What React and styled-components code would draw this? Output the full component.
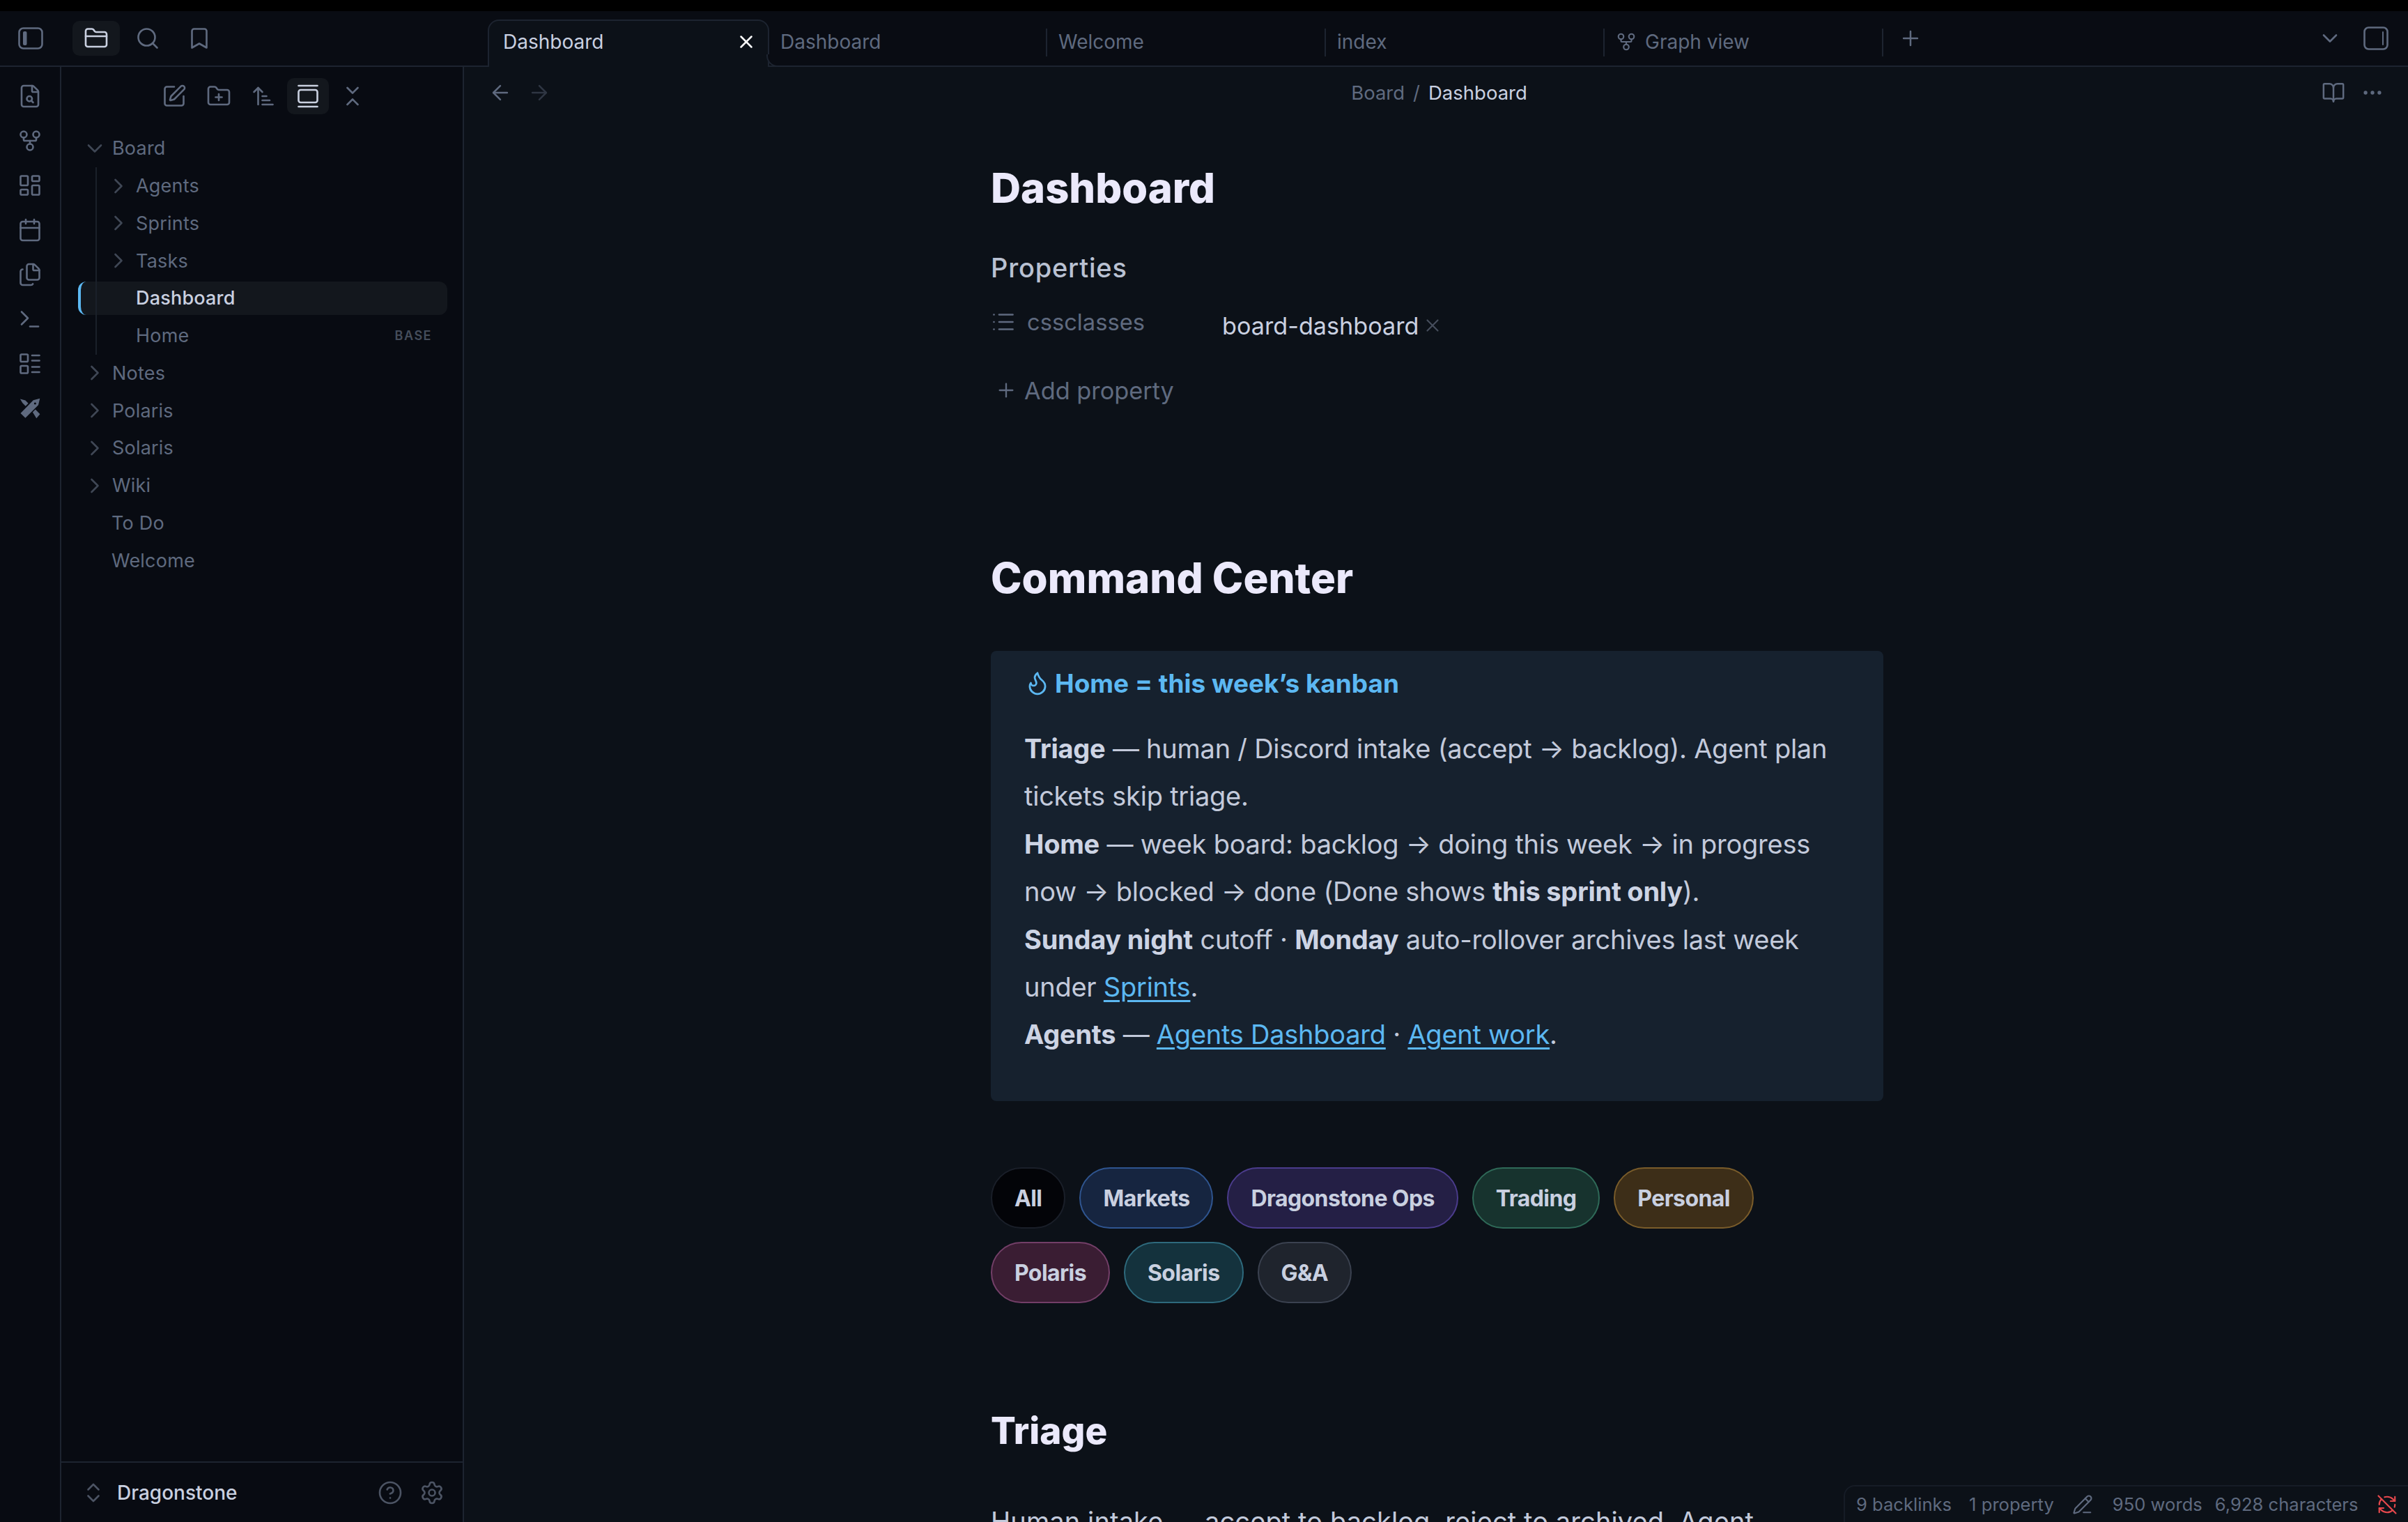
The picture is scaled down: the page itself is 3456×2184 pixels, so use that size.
import React from 'react';
import styled, { createGlobalStyle } from 'styled-components';
import {
  ArrowLeft,
  ArrowRight,
  ArrowUpNarrowWide,
  Bookmark,
  BookOpen,
  Calendar,
  ChevronDown,
  ChevronRight,
  ChevronsDownUp,
  ChevronsUpDown,
  CircleHelp,
  Ellipsis,
  FileSearch,
  Files,
  Flame,
  FolderClosed,
  FolderPlus,
  GalleryVertical,
  GitFork,
  LayoutDashboard,
  LayoutList,
  List,
  PencilLine,
  Plus,
  RefreshCwOff,
  Search,
  Settings,
  SquarePen,
  Terminal,
  X,
} from 'lucide-react';

const line = '#1d2430';
const muted = '#5f6a7f';
const soft = '#c9d0e0';
const blue = '#5cb8f2';

const GlobalStyle = createGlobalStyle`
  html, body {
    margin: 0;
    height: 100%;
    background: #000;
  }
  body {
    font-family: Inter, "Noto Sans", "Liberation Sans", sans-serif;
    overflow: hidden;
  }
  * {
    box-sizing: border-box;
  }
`;

const Page = styled.div`
  width: 3456px;
  height: 2184px;
  display: flex;
  flex-direction: column;
  padding-top: 16px;
  background: #000;
  overflow: hidden;
  position: relative;
`;

const TitleBar = styled.div`
  height: 80px;
  display: flex;
  flex-shrink: 0;
  background: #090c13;
  border-bottom: 2px solid ${line};
`;

const TitleLeft = styled.div`
  width: 700px;
  flex-shrink: 0;
  display: flex;
  align-items: center;
  padding-left: 10px;
`;

const TopButton = styled.div`
  width: 68px;
  height: 50px;
  border-radius: 10px;
  display: flex;
  align-items: center;
  justify-content: center;
  color: ${(p) => (p.$active ? soft : muted)};
  background: ${(p) => (p.$active ? '#13171d' : 'transparent')};
  margin-left: ${(p) => p.$gap || 0}px;
`;

const TabStrip = styled.div`
  flex: 1;
  display: flex;
  align-items: stretch;
  padding-top: 12px;
`;

const ActiveTab = styled.div`
  width: 404px;
  height: 68px;
  margin-bottom: -2px;
  padding: 0 16px 6px 20px;
  display: flex;
  align-items: center;
  justify-content: space-between;
  position: relative;
  color: ${soft};
  font-size: 28px;
  background: #0c1118;
  border: 2px solid ${line};
  border-bottom: 0;
  border-radius: 16px 16px 0 0;
  &::after {
    content: '';
    position: absolute;
    right: -16px;
    bottom: 0;
    width: 16px;
    height: 16px;
    background: #090c13;
    border-left: 2px solid ${line};
    border-bottom: 2px solid ${line};
    border-bottom-left-radius: 16px;
    z-index: 1;
  }
`;

const Tab = styled.div`
  width: ${(p) => p.$width || 400}px;
  height: 40px;
  margin-top: 13px;
  padding: 0 0 3px 16px;
  display: flex;
  align-items: center;
  gap: 12px;
  color: ${muted};
  font-size: 28px;
  border-right: 2px solid ${line};
`;

const TabTools = styled.div`
  flex: 1;
  display: flex;
  align-items: center;
  justify-content: space-between;
  padding: 0 28px 12px 22px;
  color: ${muted};
`;

const TabToolsRight = styled.div`
  display: flex;
  align-items: center;
  gap: 30px;
`;

const Body = styled.div`
  flex: 1;
  min-height: 0;
  display: flex;
`;

const Ribbon = styled.div`
  width: 88px;
  flex-shrink: 0;
  padding-top: 24px;
  display: flex;
  flex-direction: column;
  align-items: center;
  gap: 28px;
  color: ${muted};
  background: #080b12;
  border-right: 2px solid ${line};
`;

const Sidebar = styled.div`
  width: 578px;
  flex-shrink: 0;
  display: flex;
  flex-direction: column;
  background: #080b12;
  border-right: 2px solid ${line};
`;

const SideTools = styled.div`
  height: 74px;
  margin-top: 16px;
  padding-left: 4px;
  display: flex;
  justify-content: center;
  gap: 4px;
  color: ${muted};
`;

const SideTool = styled.div`
  width: 60px;
  height: 52px;
  border-radius: 10px;
  display: flex;
  align-items: center;
  justify-content: center;
  color: ${(p) => (p.$active ? soft : muted)};
  background: ${(p) => (p.$active ? '#13171d' : 'transparent')};
`;

const Tree = styled.div`
  flex: 1;
  padding: 0 22px 0 24px;
`;

const TreeRow = styled.div`
  height: 53.75px;
  display: flex;
  align-items: center;
  position: relative;
  padding-left: ${(p) => p.$indent}px;
  color: ${muted};
  font-size: 27px;
  letter-spacing: 0.2px;
  white-space: nowrap;
`;

const SelectedRow = styled(TreeRow)`
  color: ${soft};
  font-weight: 500;
  &::before {
    content: '';
    position: absolute;
    left: 0;
    right: 0;
    top: 3px;
    bottom: 3px;
    background: #13171d;
    border-left: 4px solid ${blue};
    border-radius: 12px;
  }
  > span {
    position: relative;
  }
`;

const Caret = styled.span`
  width: 43px;
  display: flex;
  align-items: center;
  justify-content: flex-start;
  flex-shrink: 0;
  color: #3f4755;
`;

const Nested = styled.div`
  position: relative;
  &::before {
    content: '';
    position: absolute;
    left: 25px;
    top: 0;
    bottom: 0;
    width: 2px;
    background: #1a2029;
    z-index: 1;
  }
`;

const BaseTag = styled.span`
  position: absolute;
  right: 22px;
  font-size: 18px;
  font-weight: 600;
  letter-spacing: 1.5px;
  color: #454d5b;
`;

const VaultBar = styled.div`
  height: 87px;
  display: flex;
  align-items: center;
  padding: 0 26px 0 28px;
  border-top: 2px solid ${line};
  color: ${soft};
  font-size: 28px;
  font-weight: 500;
`;

const VaultName = styled.span`
  flex: 1;
  padding-left: 16px;
`;

const VaultIcons = styled.div`
  display: flex;
  gap: 24px;
  color: #4c5464;
`;

const Main = styled.div`
  flex: 1;
  min-width: 0;
  background: #0c1118;
  position: relative;
  overflow: hidden;
`;

const NavBar = styled.div`
  height: 74px;
  padding: 0 34px 0 35px;
  display: flex;
  align-items: center;
  justify-content: space-between;
`;

const NavSide = styled.div`
  width: 300px;
  display: flex;
  align-items: center;
  gap: 22px;
  color: ${muted};
  justify-content: ${(p) => (p.$right ? 'flex-end' : 'flex-start')};
`;

const NavArrow = styled.span`
  display: flex;
  color: ${(p) => (p.$dim ? '#2f3643' : muted)};
`;

const Crumbs = styled.div`
  margin-left: 8px;
  font-size: 27.5px;
  color: ${muted};
  display: flex;
  gap: 12px;
`;

const CrumbCurrent = styled.span`
  color: ${soft};
`;

const Sheet = styled.div`
  width: 1281px;
  margin-left: 756px;
`;

const Title = styled.h1`
  margin: 64px 0 0;
  font-size: 59.6px;
  line-height: 70px;
  font-weight: 800;
  color: #ebe9fb;
`;

const PropsHeading = styled.div`
  margin-top: 58px;
  font-size: 38px;
  letter-spacing: 0.8px;
  line-height: 44px;
  font-weight: 500;
  color: #b9c1d2;
`;

const PropRow = styled.div`
  margin-top: 34px;
  display: flex;
  height: 60px;
`;

const PropKey = styled.div`
  width: 332px;
  display: flex;
  align-items: center;
  align-self: flex-start;
  gap: 16px;
  height: 44px;
  font-size: 32.7px;
  color: ${muted};
  flex-shrink: 0;
`;

const PropValue = styled.div`
  display: flex;
  align-items: center;
  gap: 4px;
  height: 54px;
  font-size: 34.2px;
  color: ${soft};
`;

const RemoveMark = styled.span`
  display: flex;
  color: #464e5c;
`;

const AddProperty = styled.div`
  margin-top: 36px;
  padding-left: 6px;
  height: 48px;
  display: flex;
  align-items: center;
  gap: 10px;
  font-size: 34.3px;
  color: ${muted};
`;

const Heading = styled.h2`
  margin: ${(p) => p.$top}px 0 0;
  font-size: ${(p) => p.$size}px;
  line-height: 70px;
  font-weight: 800;
  color: #ebe9fb;
`;

const Callout = styled.div`
  margin-top: 70px;
  height: 646px;
  padding: 20px 48px 0;
  background: #16212e;
  border-radius: 8px;
`;

const CalloutTitle = styled.div`
  display: flex;
  align-items: center;
  gap: 6px;
  height: 52px;
  font-size: 37px;
  font-weight: 700;
  color: ${blue};
`;

const CalloutText = styled.div`
  margin-top: 34px;
`;

const CalloutLine = styled.div`
  font-size: 38px;
  line-height: 68.4px;
  letter-spacing: -0.25px;
  white-space: nowrap;
  color: #c3cadb;
  b {
    font-weight: 700;
    color: #cdd4e4;
  }
  a {
    color: ${blue};
    text-decoration: underline;
    text-underline-offset: 5px;
  }
`;

const PillGroup = styled.div`
  margin-top: 95px;
  max-width: 1160px;
  display: flex;
  flex-wrap: wrap;
  gap: 19px 20px;
`;

const Pill = styled.div`
  height: 88px;
  padding: 0 32px;
  display: flex;
  align-items: center;
  border-radius: 44px;
  font-size: 32px;
  font-weight: 700;
  letter-spacing: -0.6px;
  color: ${soft};
  background: ${(p) => p.$bg};
  border: 2px solid ${(p) => p.$edge};
`;

const BodyText = styled.p`
  margin: 61px 0 0;
  font-size: 38px;
  line-height: 68px;
  letter-spacing: 0.1px;
  color: #c3cadb;
  white-space: nowrap;
`;

const StatusBar = styled.div`
  position: absolute;
  right: 0;
  bottom: 0;
  height: 53px;
  width: 810px;
  display: flex;
  align-items: center;
  padding-left: 16px;
  color: ${muted};
  font-size: 25.6px;
  background: #0c1118;
  border-top: 2px solid #161c26;
  border-left: 2px solid #161c26;
  border-top-left-radius: 16px;
  white-space: nowrap;
`;

const StatusItem = styled.span`
  margin-right: ${(p) => p.$gap}px;
  display: flex;
`;

const SyncIcon = styled.span`
  display: flex;
  color: #e5484d;
`;

const PanelLeftIcon = () => (
  <svg width="36" height="32" viewBox="0 0 36 32" fill="none">
    <rect x="1.5" y="1.5" width="33" height="29" rx="6" stroke="currentColor" strokeWidth="2.6" />
    <rect x="7" y="6" width="5.5" height="20" rx="2" fill="currentColor" />
  </svg>
);

const PanelRightIcon = () => (
  <svg width="36" height="34" viewBox="0 0 36 34" fill="none">
    <rect x="1.5" y="1.5" width="33" height="31" rx="6" stroke="currentColor" strokeWidth="2.6" />
    <rect x="27" y="7" width="2" height="20" rx="1" fill="currentColor" />
  </svg>
);

const ToolsIcon = () => (
  <svg width="36" height="36" viewBox="0 0 24 24" fill="currentColor">
    <path fillRule="evenodd" d="M21.5 2.5l-1.5 6.3L7.6 21.2 3 16.6 15.2 4.2zM16.9 6.4a1 1 0 1 0 .01 0z" />
    <path d="M2.6 3l5 1.4 2.8 2.8-2.6 2.6-2.9-2.9z" />
    <path d="M14.6 15.6l2.6-2.6 4.4 4.5-3.4 4z" />
  </svg>
);

const ribbonIcons = [FileSearch, GitFork, LayoutDashboard, Calendar, Files, Terminal, LayoutList];

const pills = [
  ['All', '#030408', '#1a1f29'],
  ['Markets', '#162540', '#2f5590'],
  ['Dragonstone Ops', '#241f45', '#4b3c8c'],
  ['Trading', '#17332e', '#2f6a58'],
  ['Personal', '#3d2e18', '#7a5c2a'],
  ['Polaris', '#3a1d33', '#733f68'],
  ['Solaris', '#14323d', '#2e6a7d'],
  ['G&A', '#1f242d', '#3b4250'],
];

const App = () => {
  return (
    <Page>
      <GlobalStyle />
      <TitleBar>
        <TitleLeft>
          <TopButton><PanelLeftIcon /></TopButton>
          <TopButton $active $gap={26}><FolderClosed size={36} strokeWidth={1.75} /></TopButton>
          <TopButton $gap={6}><Search size={36} strokeWidth={1.75} /></TopButton>
          <TopButton $gap={6}><Bookmark size={36} strokeWidth={1.75} /></TopButton>
        </TitleLeft>
        <TabStrip>
          <ActiveTab>
            <span>Dashboard</span>
            <X size={30} strokeWidth={2} color="#fff" />
          </ActiveTab>
          <Tab $width={399}>Dashboard</Tab>
          <Tab>Welcome</Tab>
          <Tab>index</Tab>
          <Tab>
            <GitFork size={30} strokeWidth={1.75} />
            Graph view
          </Tab>
          <TabTools>
            <Plus size={34} strokeWidth={1.75} />
            <TabToolsRight>
              <ChevronDown size={36} strokeWidth={1.75} />
              <PanelRightIcon />
            </TabToolsRight>
          </TabTools>
        </TabStrip>
      </TitleBar>
      <Body>
        <Ribbon>
          {ribbonIcons.map((Icon, i) => (
            <Icon key={i} size={36} strokeWidth={1.75} />
          ))}
          <ToolsIcon />
        </Ribbon>
        <Sidebar>
          <SideTools>
            <SideTool><SquarePen size={36} strokeWidth={1.75} /></SideTool>
            <SideTool><FolderPlus size={36} strokeWidth={1.75} /></SideTool>
            <SideTool><ArrowUpNarrowWide size={36} strokeWidth={1.75} /></SideTool>
            <SideTool $active><GalleryVertical size={36} strokeWidth={1.75} /></SideTool>
            <SideTool><ChevronsDownUp size={36} strokeWidth={1.75} /></SideTool>
          </SideTools>
          <Tree>
            <TreeRow $indent={6}>
              <Caret><ChevronDown size={36} strokeWidth={1.75} /></Caret>
              Board
            </TreeRow>
            <Nested>
              <TreeRow $indent={40}>
                <Caret><ChevronRight size={36} strokeWidth={1.75} /></Caret>
                Agents
              </TreeRow>
              <TreeRow $indent={40}>
                <Caret><ChevronRight size={36} strokeWidth={1.75} /></Caret>
                Sprints
              </TreeRow>
              <TreeRow $indent={40}>
                <Caret><ChevronRight size={36} strokeWidth={1.75} /></Caret>
                Tasks
              </TreeRow>
              <SelectedRow $indent={83}><span>Dashboard</span></SelectedRow>
              <TreeRow $indent={83}>
                Home
                <BaseTag>BASE</BaseTag>
              </TreeRow>
            </Nested>
            {['Notes', 'Polaris', 'Solaris', 'Wiki'].map((name) => (
              <TreeRow $indent={6} key={name}>
                <Caret><ChevronRight size={36} strokeWidth={1.75} /></Caret>
                {name}
              </TreeRow>
            ))}
            <TreeRow $indent={48}>To Do</TreeRow>
            <TreeRow $indent={48}>Welcome</TreeRow>
          </Tree>
          <VaultBar>
            <ChevronsUpDown size={36} strokeWidth={1.75} color="#4c5464" />
            <VaultName>Dragonstone</VaultName>
            <VaultIcons>
              <CircleHelp size={36} strokeWidth={1.75} />
              <Settings size={36} strokeWidth={1.75} />
            </VaultIcons>
          </VaultBar>
        </Sidebar>
        <Main>
          <NavBar>
            <NavSide>
              <NavArrow><ArrowLeft size={34} strokeWidth={1.75} /></NavArrow>
              <NavArrow $dim><ArrowRight size={34} strokeWidth={1.75} /></NavArrow>
            </NavSide>
            <Crumbs>
              <span>Board</span>
              <span>/</span>
              <CrumbCurrent>Dashboard</CrumbCurrent>
            </Crumbs>
            <NavSide $right>
              <BookOpen size={34} strokeWidth={1.75} />
              <Ellipsis size={34} strokeWidth={1.75} />
            </NavSide>
          </NavBar>
          <Sheet>
            <Title>Dashboard</Title>
            <PropsHeading>Properties</PropsHeading>
            <PropRow>
              <PropKey>
                <List size={36} strokeWidth={1.75} />
                cssclasses
              </PropKey>
              <PropValue>
                board-dashboard
                <RemoveMark><X size={30} strokeWidth={1.75} /></RemoveMark>
              </PropValue>
            </PropRow>
            <AddProperty>
              <Plus size={32} strokeWidth={1.75} />
              Add property
            </AddProperty>
            <Heading $top={210} $size={60}>Command Center</Heading>
            <Callout>
              <CalloutTitle>
                <Flame size={38} strokeWidth={1.75} />
                Home = this week’s kanban
              </CalloutTitle>
              <CalloutText>
                <CalloutLine><b>Triage</b> — human / Discord intake (accept → backlog). Agent plan</CalloutLine>
                <CalloutLine>tickets skip triage.</CalloutLine>
                <CalloutLine><b>Home</b> — week board: backlog → doing this week → in progress</CalloutLine>
                <CalloutLine>now → blocked → done (Done shows <b>this sprint only</b>).</CalloutLine>
                <CalloutLine><b>Sunday night</b> cutoff · <b>Monday</b> auto-rollover archives last week</CalloutLine>
                <CalloutLine>under <a href="#sprints">Sprints</a>.</CalloutLine>
                <CalloutLine><b>Agents</b> — <a href="#agents">Agents Dashboard</a> · <a href="#work">Agent work</a>.</CalloutLine>
              </CalloutText>
            </Callout>
            <PillGroup>
              {pills.map(([label, bg, edge]) => (
                <Pill key={label} $bg={bg} $edge={edge}>{label}</Pill>
              ))}
            </PillGroup>
            <Heading $top={148} $size={53}>Triage</Heading>
            <BodyText>Human intake — accept to backlog, reject to archived. Agent</BodyText>
          </Sheet>
          <StatusBar>
            <StatusItem $gap={25}>9 backlinks</StatusItem>
            <StatusItem $gap={26}>1 property</StatusItem>
            <StatusItem $gap={28}><PencilLine size={30} strokeWidth={1.75} /></StatusItem>
            <StatusItem $gap={18}>950 words</StatusItem>
            <StatusItem $gap={26}>6,928 characters</StatusItem>
            <SyncIcon><RefreshCwOff size={30} strokeWidth={1.75} /></SyncIcon>
          </StatusBar>
        </Main>
      </Body>
    </Page>
  );
};

export default App;
